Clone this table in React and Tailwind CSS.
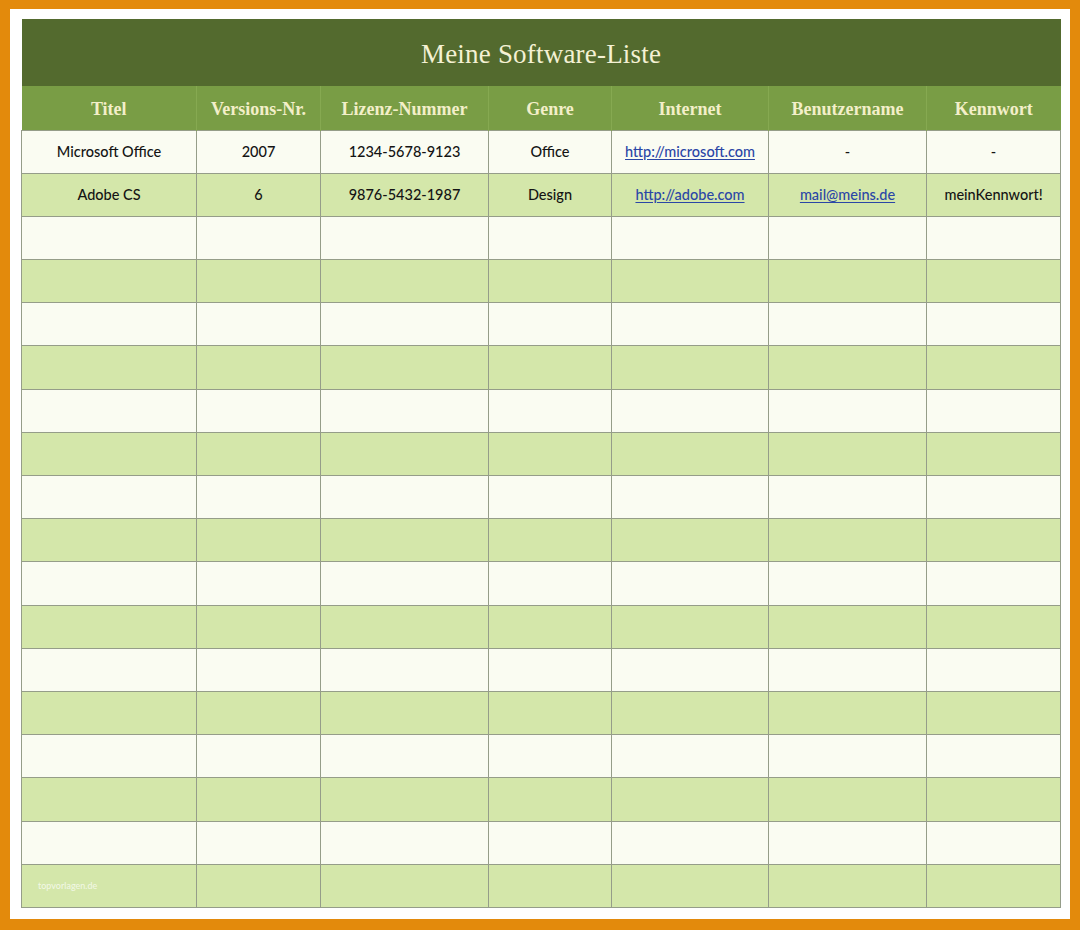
import React from 'react'

const columns = [
  { label: 'Titel', width: 'w-[175px]' },
  { label: 'Versions-Nr.', width: 'w-[124px]' },
  { label: 'Lizenz-Nummer', width: 'w-[168px]' },
  { label: 'Genre', width: 'w-[123px]' },
  { label: 'Internet', width: 'w-[157px]' },
  { label: 'Benutzername', width: 'w-[158px]' },
  { label: 'Kennwort', width: 'w-[134px]' },
]

// Entries the user already filled in; remaining rows are blank
const entries = [
  ['Microsoft Office', '2007', '1234-5678-9123', 'Office', { link: 'http://microsoft.com' }, '-', '-'],
  ['Adobe CS', '6', '9876-5432-1987', 'Design', { link: 'http://adobe.com' }, { link: 'mail@meins.de' }, 'meinKennwort!'],
]

const TOTAL_ROWS = 18

function Cell({ value }) {
  if (value && typeof value === 'object') {
    return (
      <span className="text-[#2a46a6] underline decoration-[#2a46a6] underline-offset-2">{value.link}</span>
    )
  }
  return <span>{value}</span>
}

export default function App() {
  const rows = Array.from({ length: TOTAL_ROWS }, (_, i) => entries[i] || null)

  return (
    <div className="w-[1080px] h-[930px] bg-[#e38a0c] pt-[9px] pl-[10px] pr-[10px] pb-[11px]">
      <div className="w-full h-full bg-white pt-[10px] pl-[11px] pr-[10px]">
        <table className="table-fixed border-collapse w-[1039px]" style={{ fontFamily: 'Lato, "Open Sans", sans-serif' }}>
          <colgroup>
            {columns.map((c) => (
              <col key={c.label} className={c.width} />
            ))}
          </colgroup>
          <thead>
            <tr className="h-[67px] bg-[#536a2e]">
              <th
                colSpan={7}
                className="text-[27px] font-normal text-[#f4f1d4] tracking-[0.2px] pt-[4px]"
                style={{ fontFamily: '"Liberation Serif", "DejaVu Serif", serif' }}
              >
                Meine Software-Liste
              </th>
            </tr>
            <tr className="h-[44px] bg-[#799d45]">
              {columns.map((c) => (
                <th
                  key={c.label}
                  className="text-[18px] font-bold text-[#f3efc9] border-x border-[#86a951] first:border-l-0 last:border-r-0 pt-[3px]"
                  style={{ fontFamily: '"Liberation Serif", "DejaVu Serif", serif' }}
                >
                  {c.label}
                </th>
              ))}
            </tr>
          </thead>
          <tbody>
            {rows.map((row, i) => (
              <tr key={i} className={i % 2 === 0 ? 'h-[43.2px] bg-[#fafcf2]' : 'h-[43.2px] bg-[#d4e7aa]'}>
                {columns.map((c, j) => (
                  <td
                    key={c.label}
                    className="border border-[#959d89] text-center text-[14.5px] font-medium text-[#141414] p-0 relative"
                  >
                    {row ? <Cell value={row[j]} /> : null}
                    {i === TOTAL_ROWS - 1 && j === 0 ? (
                      <span className="absolute left-[16px] top-[14px] text-[9px] text-white/70">topvorlagen.de</span>
                    ) : null}
                  </td>
                ))}
              </tr>
            ))}
          </tbody>
        </table>
      </div>
    </div>
  )
}
